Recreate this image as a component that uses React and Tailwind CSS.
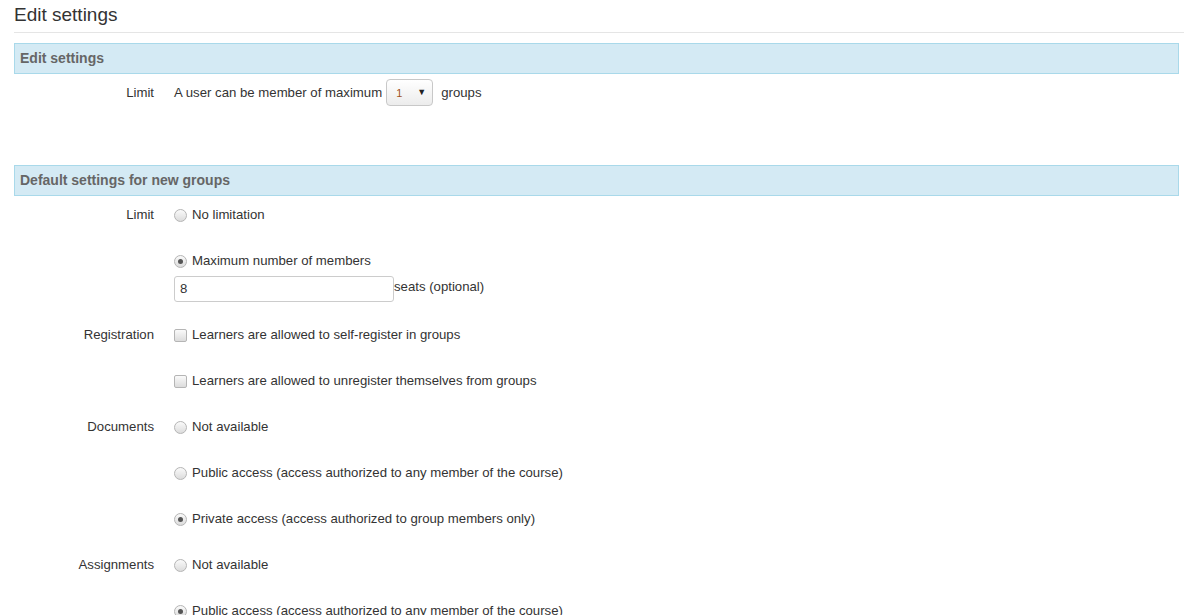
import React from 'react';

function Radio({ checked }) {
  return (
    <span className="inline-flex items-center justify-center w-[13px] h-[13px] rounded-full border border-[#b5b5b5] bg-gradient-to-b from-[#fafafa] to-[#dcdcdc] shrink-0">
      {checked && <span className="w-[5px] h-[5px] rounded-full bg-[#555]" />}
    </span>
  );
}

function Checkbox() {
  return (
    <span className="inline-block w-[13px] h-[13px] rounded-[2px] border border-[#b5b5b5] bg-gradient-to-b from-[#fafafa] to-[#dcdcdc] shrink-0" />
  );
}

function SectionHeader({ children }) {
  return (
    <div className="h-[31px] border border-[#a9d9ea] bg-[#d4eaf4] px-[5px] flex items-center text-[14px] font-bold text-[#666]">
      {children}
    </div>
  );
}

function Row({ label, children, className = '' }) {
  return (
    <div className={`flex ${className}`}>
      <div className="w-[140px] text-right shrink-0">{label}</div>
      <div className="pl-[20px] flex-1">{children}</div>
    </div>
  );
}

function Option({ type, checked, text }) {
  return (
    <div className="flex items-center gap-[5px] h-[20px]">
      {type === 'radio' ? <Radio checked={checked} /> : <Checkbox />}
      <span>{text}</span>
    </div>
  );
}

export default function App() {
  return (
    <div className="bg-white h-[615px] text-[13.2px] text-[#333] font-['Liberation_Sans',Arial,sans-serif] pl-[14px] overflow-hidden">
      <h1 className="text-[19px] leading-[20px] pt-[5px] pb-[7px] border-b border-[#e5e5e5]">Edit settings</h1>

      <div className="pr-[5px] mt-[10px]">
        <SectionHeader>Edit settings</SectionHeader>

        <Row label="Limit" className="mt-[5px] items-center h-[27px]">
          <div className="flex items-center">
            <span>A user can be member of maximum</span>
            <span className="ml-[4px] w-[47px] h-[27px] rounded-[4px] border border-[#c8c8c8] bg-gradient-to-b from-white to-[#ececec] flex items-center justify-between pl-[9px] pr-[6px]">
              <span className="text-[11px] text-[#a0521d] mt-[2px]">1</span>
              <span className="text-[9px] text-[#222]">▼</span>
            </span>
            <span className="ml-[8px]">groups</span>
          </div>
        </Row>

        <div className="mt-[59px]">
          <SectionHeader>Default settings for new groups</SectionHeader>
        </div>

        <div className="pt-[9px]">
          <Row label={<div className="h-[20px] leading-[20px]">Limit</div>}>
            <Option type="radio" text="No limitation" />
            <div className="mt-[26px]">
              <Option type="radio" checked text="Maximum number of members" />
            </div>
            <div className="flex items-center mt-[5px]">
              <div className="w-[220px] h-[26px] border border-[#ccc] rounded-[3px] px-[5px] flex items-center">8</div>
              <span className="-mt-[4px]">seats (optional)</span>
            </div>
          </Row>

          <Row label={<div className="h-[20px] leading-[20px]">Registration</div>} className="mt-[23px]">
            <Option type="checkbox" text="Learners are allowed to self-register in groups" />
            <div className="mt-[26px]">
              <Option type="checkbox" text="Learners are allowed to unregister themselves from groups" />
            </div>
          </Row>

          <Row label={<div className="h-[20px] leading-[20px]">Documents</div>} className="mt-[26px]">
            <Option type="radio" text="Not available" />
            <div className="mt-[26px]">
              <Option type="radio" text="Public access (access authorized to any member of the course)" />
            </div>
            <div className="mt-[26px]">
              <Option type="radio" checked text="Private access (access authorized to group members only)" />
            </div>
          </Row>

          <Row label={<div className="h-[20px] leading-[20px]">Assignments</div>} className="mt-[26px]">
            <Option type="radio" text="Not available" />
            <div className="mt-[26px]">
              <Option type="radio" checked text="Public access (access authorized to any member of the course)" />
            </div>
            <div className="mt-[26px]">
              <Option type="radio" text="Private access (access authorized to group members only)" />
            </div>
          </Row>
        </div>
      </div>
    </div>
  );
}
